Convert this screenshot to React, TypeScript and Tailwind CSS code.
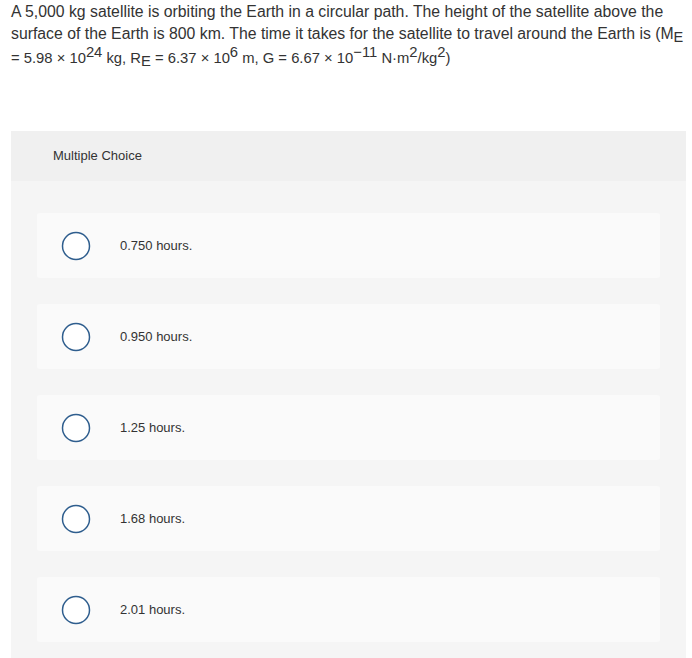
import React from "react";

const OPTIONS = ["0.750 hours.", "0.950 hours.", "1.25 hours.", "1.68 hours.", "2.01 hours."];

function Radio() {
  return (
    <svg width="30" height="30" viewBox="0 0 30 30" className="shrink-0">
      <circle cx="15" cy="15" r="13.5" fill="#ffffff" stroke="#2f5e8e" strokeWidth="1.5" />
    </svg>
  );
}

export default function App() {
  return (
    <div className="min-h-[658px] bg-white text-[#333333] font-['Liberation_Sans','Arial',sans-serif]">
      <p className="pl-[11px] pr-[4px] pt-[1px] text-[15.8px] leading-[22px]">
        A 5,000 kg satellite is orbiting the Earth in a circular path. The height of the satellite above the surface of the
        Earth is 800 km. The time it takes for the satellite to travel around the Earth is (M
        <sub className="text-[14.5px] relative top-[3px]">E</sub>{" "}
        <span className="text-[14.8px] relative top-[2px]">
          = 5.98 × 10<sup className="text-[14.8px] -top-[6px]">24</sup> kg, R
          <sub className="text-[14.8px] relative top-[3px]">E</sub> = 6.37 × 10
          <sup className="text-[14.8px] -top-[6px]">6</sup> m, G = 6.67 × 10
          <sup className="text-[14.8px] -top-[6px]">−11</sup> N·m<sup className="text-[14.8px] -top-[6px]">2</sup>/kg
          <sup className="text-[14.8px] -top-[6px]">2</sup>)
        </span>
      </p>

      <div className="ml-[11px] mr-[6px] mt-[64px] bg-[#f5f5f5]">
        <div className="h-[50px] bg-[#f0f0f0] pl-[42px] flex items-center text-[13px]">Multiple Choice</div>
        <div className="pt-[32px] px-[26px] flex flex-col gap-[26px] pb-[16px]">
          {OPTIONS.map((o) => (
            <div key={o} className="h-[65px] bg-[#fafafa] rounded-[3px] flex items-center pl-[24px]">
              <Radio />
              <span className="ml-[29px] text-[13px]">{o}</span>
            </div>
          ))}
        </div>
      </div>
    </div>
  );
}
